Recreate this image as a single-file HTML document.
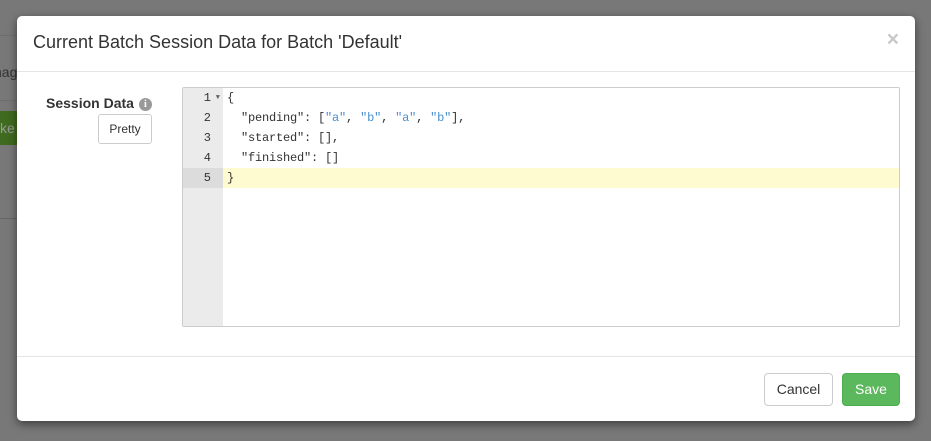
<!DOCTYPE html>
<html><head><style>
body{margin:0;width:931px;height:441px;background:#787878;position:relative;overflow:hidden;font-family:"Liberation Sans",sans-serif}
.bg1{position:absolute;left:0;top:35px;width:20px;height:1px;background:#6e6e6e}
.bg2{position:absolute;left:0;top:100px;width:20px;height:1px;background:#6e6e6e}
.bg3{position:absolute;left:0;top:218px;width:20px;height:1px;background:#666}
.nag{position:absolute;left:-6px;top:64px;color:#333;font-size:14px}
.gr{position:absolute;left:0;top:111px;width:20px;height:34px;background:#3f6a1f;color:#999;font-size:14px;line-height:34px}
.modal{position:absolute;left:17px;top:16px;width:898px;height:405px;background:#fff;border-radius:5px;box-shadow:0 3px 9px rgba(0,0,0,.5)}
.hd{height:55px;border-bottom:1px solid #e5e5e5;position:relative}
.hd h4{margin:0;position:absolute;left:16px;top:16px;font-size:18px;font-weight:normal;color:#333}
.x{position:absolute;right:16px;top:12px;font-size:21px;font-weight:bold;color:#c8c8c8}
.lbl{position:absolute;left:29px;top:79px;font-weight:bold;font-size:14px;color:#333}
.info{display:inline-block;width:13px;height:13px;border-radius:50%;background:#999;color:#fff;font-size:10px;text-align:center;line-height:13px;vertical-align:1px;margin-left:5px;font-family:"Liberation Serif",serif}
.pretty{position:absolute;left:81px;top:98px;width:54px;height:30px;border:1px solid #ccc;border-radius:3px;font-size:12px;color:#333;text-align:center;line-height:28px;box-sizing:border-box}
.ed{position:absolute;left:165px;top:71px;width:716px;height:238px;border:1px solid #ccc;border-radius:2px;overflow:hidden;font-family:"Liberation Mono",monospace;font-size:12px}
.gut{position:absolute;left:0;top:0;width:40px;height:100%;background:#ebebeb}
.ln{position:absolute;left:0;width:40px;height:20px;line-height:20px;text-align:right;color:#333;box-sizing:border-box;padding-right:12px}
.act{position:absolute;left:40px;top:80px;right:0;height:20px;background:#fffbd1}
.actg{position:absolute;left:0;top:80px;width:40px;height:20px;background:#dcdcdc}
.cl{position:absolute;left:44px;height:20px;line-height:20px;color:#333;white-space:pre;letter-spacing:-0.2px}
.s{color:#4a8fd0}
.ft{position:absolute;left:0;right:0;top:340px;border-top:1px solid #e5e5e5}
.btn{position:absolute;top:357px;height:33px;border-radius:4px;font-size:14px;line-height:31px;text-align:center;box-sizing:border-box}
</style></head><body>
<div class="bg1"></div><div class="bg2"></div><div class="bg3"></div>
<div class="nag">nag</div><div class="gr">ke</div>
<div class="modal">
<div class="hd"><h4>Current Batch Session Data for Batch 'Default'</h4><div class="x">×</div></div>
<div class="lbl">Session Data<span class="info">i</span></div>
<div class="pretty">Pretty</div>
<div class="ed">
<div class="gut"></div><div class="actg"></div><div class="act"></div>
<div class="ln" style="top:0">1<span style="font-size:7px;position:absolute;right:3px;color:#666">▼</span></div>
<div class="ln" style="top:20px">2</div><div class="ln" style="top:40px">3</div><div class="ln" style="top:60px">4</div><div class="ln" style="top:80px">5</div>
<div class="cl" style="top:0">{</div>
<div class="cl" style="top:20px">  "pending": [<span class="s">"a"</span>, <span class="s">"b"</span>, <span class="s">"a"</span>, <span class="s">"b"</span>],</div>
<div class="cl" style="top:40px">  "started": [],</div>
<div class="cl" style="top:60px">  "finished": []</div>
<div class="cl" style="top:80px">}</div>
</div>
<div class="ft"></div>
<div class="btn" style="left:747px;width:69px;border:1px solid #ccc;color:#333">Cancel</div>
<div class="btn" style="left:825px;width:58px;background:#5cb85c;border:1px solid #4cae4c;color:#fff">Save</div>
</div>
</body></html>
